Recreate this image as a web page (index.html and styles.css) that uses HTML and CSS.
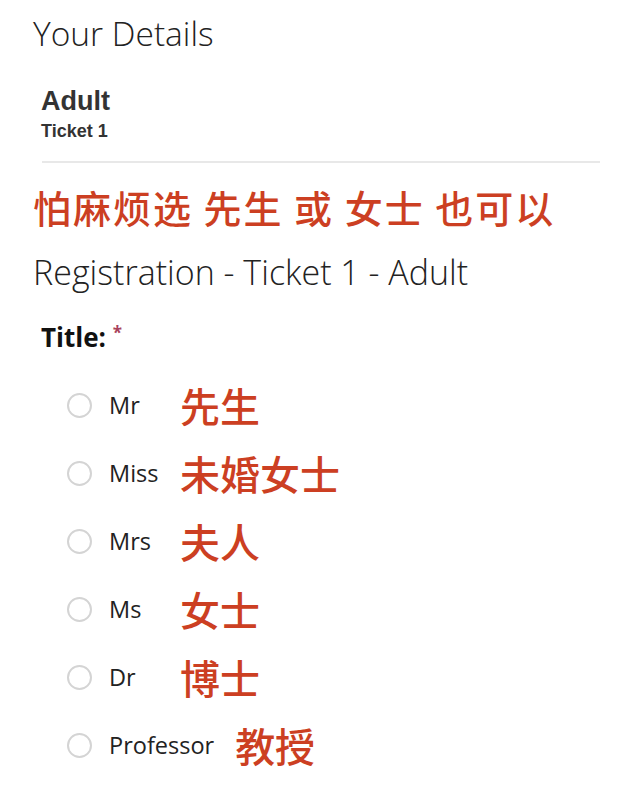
FILE: index.html
```html
<!DOCTYPE html>
<html lang="en">
<head>
  <meta charset="UTF-8">
  <title>Your Details</title>
  <meta name="viewport" content="width=device-width, initial-scale=1.0">
  <link rel="stylesheet" href="styles.css">
</head>
<body>
  <div id="page">
    <h1 class="section-title">Your Details</h1>

    <div class="ticket">
      <h3>Adult</h3>
      <p>Ticket 1</p>
    </div>
    <hr class="divider">

    <p class="note">怕麻烦选 先生 或 女士 也可以</p>

    <h2 class="form-title">Registration - Ticket 1 - Adult</h2>

    <div class="field">
      <div class="field-label">Title: <span class="req">*</span></div>

      <label class="option"><span class="radio"></span><span class="opt-text">Mr</span><span class="opt-note">先生</span></label>
      <label class="option"><span class="radio"></span><span class="opt-text">Miss</span><span class="opt-note">未婚女士</span></label>
      <label class="option"><span class="radio"></span><span class="opt-text">Mrs</span><span class="opt-note">夫人</span></label>
      <label class="option"><span class="radio"></span><span class="opt-text">Ms</span><span class="opt-note">女士</span></label>
      <label class="option"><span class="radio"></span><span class="opt-text">Dr</span><span class="opt-note">博士</span></label>
      <label class="option"><span class="radio"></span><span class="opt-text">Professor</span><span class="opt-note">教授</span></label>
    </div>
  </div>
</body>
</html>
```

FILE: styles.css
```css
* { box-sizing: border-box; }
body {
  margin: 0;
  background: #fff;
  color: #222;
  font-family: 'Open Sans', sans-serif;
}

#page {
  padding: 13px 0 0 33px;
}

.section-title,
.form-title {
  margin: 0;
  font-weight: 300;
  color: #222;
}

.section-title {
  font-size: 33.5px;
  line-height: 40px;
}

.ticket {
  margin-top: 33px;
  padding-left: 8px;
  font-family: 'Liberation Sans', Arial, sans-serif;
  color: #333;
}

.ticket h3 {
  margin: 0;
  font-size: 27px;
  line-height: 30px;
  font-weight: bold;
}

.ticket p {
  margin: 5px 0 0;
  font-size: 18px;
  line-height: 20px;
  font-weight: bold;
}

.divider {
  margin: 20px 0 0 9px;
  width: 558px;
  border: none;
  border-top: 2px solid #e8e8e8;
}

.note,
.opt-note {
  font-family: 'Noto Sans CJK SC', 'Noto Sans', sans-serif;
  color: #cc3f22;
  font-weight: 500;
}

.note {
  margin: 22px 0 0;
  font-size: 38px;
  line-height: 44px;
  letter-spacing: 2px;
  word-spacing: 0;
}

.form-title {
  margin-top: 23px;
  font-size: 34px;
  line-height: 40px;
}

.field {
  margin-top: 29px;
}

.field-label {
  padding-left: 8px;
  font-size: 26px;
  line-height: 32px;
  font-weight: bold;
  color: #111;
  margin-bottom: 18px;
}

.req {
  font-size: 17px;
  color: #a8425c;
  vertical-align: top;
  position: relative;
  top: -4px;
}

.option {
  display: flex;
  align-items: center;
  height: 68px;
  padding-left: 34px;
  cursor: pointer;
}

.radio {
  width: 25px;
  height: 25px;
  border: 2px solid #d4d4d4;
  border-radius: 50%;
  flex-shrink: 0;
}

.opt-text {
  margin-left: 17px;
  min-width: 50px;
  font-size: 23.5px;
  color: #222;
}

.opt-note {
  margin-left: 21px;
  font-size: 40px;
  line-height: 44px;
}
```
